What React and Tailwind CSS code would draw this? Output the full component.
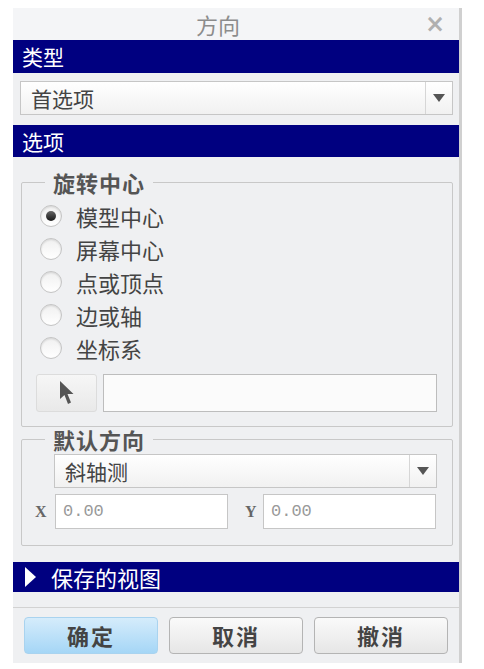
import React from "react";

const CJK = { fontFamily: '"Noto Sans CJK SC", "Noto Sans", sans-serif' };

function Arrow() {
  return (
    <svg width="12" height="8" viewBox="0 0 12 8">
      <polygon points="0,0 12,0 6,8" fill="#555" />
    </svg>
  );
}

function Dropdown({ label, className }) {
  return (
    <div
      className={
        "flex h-[34px] border border-[#c6c6c6] bg-gradient-to-b from-[#ffffff] to-[#f1f1f1] " +
        className
      }
    >
      <div className="flex flex-1 items-center pl-[10px] text-[21px] leading-none text-[#444]">{label}</div>
      <div className="flex w-[27px] items-center justify-center border-l border-[#d6d6d6]">
        <Arrow />
      </div>
    </div>
  );
}

function Radio({ checked, label }) {
  return (
    <div className="flex h-[33px] items-center">
      <div className="flex h-[22px] w-[22px] items-center justify-center rounded-full border border-[#c4c4c4] bg-gradient-to-b from-[#f0f0f0] to-[#ffffff] shadow-[inset_0_1px_2px_rgba(0,0,0,0.12)]">
        {checked && (
          <div className="h-[10px] w-[10px] rounded-full bg-gradient-to-b from-[#666] to-[#1a1a1a]" />
        )}
      </div>
      <span className="ml-[14px] text-[22px] leading-none text-[#444]">{label}</span>
    </div>
  );
}

function Group({ title, children, className }) {
  return (
    <fieldset className={"ml-[8px] w-[432px] rounded-[2px] border border-[#c8c8c8] " + className}>
      <legend className="ml-[23px] px-[8px] text-[22px] font-bold leading-[24px] tracking-[1px] text-[#555]">
        {title}
      </legend>
      {children}
    </fieldset>
  );
}

function Btn({ children, primary }) {
  return (
    <div
      className={
        "flex h-[37px] w-[134px] items-center justify-center rounded-[4px] border text-[22px] font-bold tracking-[2px] text-[#444] " +
        (primary
          ? "border-[#a9d3ef] bg-gradient-to-b from-[#d5ecfb] to-[#a5d6f6]"
          : "border-[#b4b4b4] bg-gradient-to-b from-[#fafafa] to-[#e6e6e6]")
      }
    >
      {children}
    </div>
  );
}

export default function App() {
  return (
    <div className="min-h-[669px] w-[484px] bg-white pt-[8px]" style={CJK}>
      <div className="ml-[13px] flex w-[449px]">
        <div className="w-[446px] bg-[#eff0f2] pb-[9px]">
          {/* title */}
          <div className="flex h-[32px] items-center bg-[#f4f5f7]">
            <div className="flex-1 pl-[4px] text-center text-[22px] leading-none text-[#8c8c8c]">方向</div>
            <div className="w-[40px] pr-[8px] text-center text-[24px] font-bold leading-none text-[#b0b0b0]" style={{ fontFamily: '"DejaVu Sans", sans-serif' }}>×</div>
          </div>
          {/* 类型 */}
          <div className="flex h-[33px] items-center bg-[#000080] pl-[9px] text-[21px] leading-none text-white">
            类型
          </div>
          <Dropdown label="首选项" className="ml-[7px] mt-[8px] w-[433px]" />
          <div className="mt-[10px] flex h-[32px] items-center bg-[#000080] pl-[9px] text-[21px] leading-none text-white">
            选项
          </div>

          <Group title="旋转中心" className="mt-[13px] pb-[14px]">
            <div className="pl-[18px] pt-[5px]">
              <Radio checked label="模型中心" />
              <Radio label="屏幕中心" />
              <Radio label="点或顶点" />
              <Radio label="边或轴" />
              <Radio label="坐标系" />
            </div>
            <div className="ml-[14px] mt-[10px] flex gap-[6px]">
              <div className="flex h-[38px] w-[61px] items-center justify-center rounded-[3px] border border-[#dcdcdc] bg-gradient-to-b from-[#f6f6f6] to-[#e9e9e9]">
                <svg width="16" height="26" viewBox="0 0 16 26">
                  <path d="M1 1 L1 19 L5.5 15 L9 24 L12 22.5 L8.5 14 L14.5 14 Z" fill="#555" />
                </svg>
              </div>
              <div className="h-[38px] w-[334px] border border-[#bdbdbd] bg-[#fbfbfb]" />
            </div>
          </Group>

          <Group title="默认方向" className="pb-[16px]">
            <Dropdown label="斜轴测" className="ml-[32px] mt-[3px] w-[383px]" />
            <div className="mt-[6px] flex h-[35px] items-center">
              <span className="ml-[13px] w-[20px] text-[16px] font-bold text-[#666]" style={{ fontFamily: '"Liberation Serif", serif' }}>
                X
              </span>
              <div className="flex h-[35px] w-[173px] items-center border border-[#c6c6c6] bg-white pl-[7px] text-[17px] text-[#999]" style={{ fontFamily: '"Liberation Mono", monospace' }}>
                0.00
              </div>
              <span className="ml-[17px] w-[18px] text-[16px] font-bold text-[#666]" style={{ fontFamily: '"Liberation Serif", serif' }}>
                Y
              </span>
              <div className="flex h-[35px] w-[173px] items-center border border-[#c6c6c6] bg-white pl-[7px] text-[17px] text-[#999]" style={{ fontFamily: '"Liberation Mono", monospace' }}>
                0.00
              </div>
            </div>
          </Group>

          <div className="mt-[16px] flex h-[30px] items-center bg-[#000080] pl-[12px] text-[22px] leading-none text-white">
            <svg width="11" height="20" viewBox="0 0 11 20">
              <polygon points="0,0 11,10 0,20" fill="#fff" />
            </svg>
            <span className="ml-[15px]">保存的视图</span>
          </div>
          <div className="mt-[15px] h-[1px] bg-[#d2d2d2]" />
          <div className="ml-[11px] mt-[9px] flex gap-[11px]">
            <Btn primary>确定</Btn>
            <Btn>取消</Btn>
            <Btn>撤消</Btn>
          </div>
        </div>
        <div className="w-[3px] bg-[#d0d0d0]" />
      </div>
    </div>
  );
}
